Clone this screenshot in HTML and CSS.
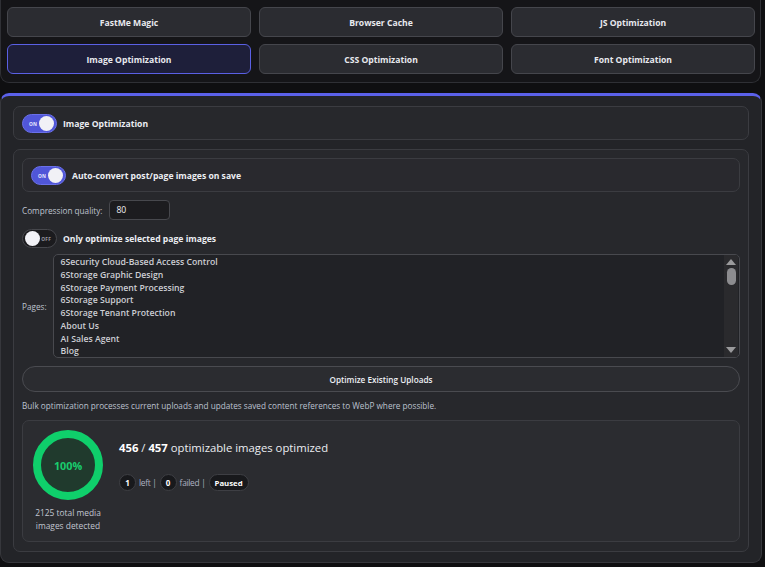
FILE: index.html
```html
<!DOCTYPE html>
<html>
<head>
<meta charset="utf-8">
<link rel="stylesheet" href="styles.css">
</head>
<body>
<nav class="tabs">
  <button class="tab">FastMe Magic</button>
  <button class="tab">Browser Cache</button>
  <button class="tab">JS Optimization</button>
  <button class="tab active">Image Optimization</button>
  <button class="tab">CSS Optimization</button>
  <button class="tab">Font Optimization</button>
</nav>

<main class="panel">
  <section class="card head-card">
    <span class="toggle on"><span class="tlabel">ON</span><span class="knob"></span></span>
    <span class="strong">Image Optimization</span>
  </section>

  <section class="card body-card">
    <div class="card sub-card">
      <span class="toggle on"><span class="tlabel">ON</span><span class="knob"></span></span>
      <span class="strong">Auto-convert post/page images on save</span>
    </div>

    <div class="row q-row">
      <label class="label">Compression quality:</label>
      <input class="num" type="text" value="80">
    </div>

    <div class="row sel-row">
      <span class="toggle off"><span class="knob"></span><span class="tlabel">OFF</span></span>
      <span class="strong">Only optimize selected page images</span>
    </div>

    <div class="row pages-row">
      <label class="label">Pages:</label>
      <div class="listbox">
        <ul class="options">
          <li>6Security Cloud-Based Access Control</li>
          <li>6Storage Graphic Design</li>
          <li>6Storage Payment Processing</li>
          <li>6Storage Support</li>
          <li>6Storage Tenant Protection</li>
          <li>About Us</li>
          <li>AI Sales Agent</li>
          <li>Blog</li>
        </ul>
        <div class="sb">
          <span class="arrow up"></span>
          <div class="track"><span class="thumb"></span></div>
          <span class="arrow down"></span>
        </div>
      </div>
    </div>

    <button class="bulk-btn">Optimize Existing Uploads</button>

    <p class="note">Bulk optimization processes current uploads and updates saved content references to WebP where possible.</p>

    <div class="card stats">
      <div class="ring-col">
        <div class="ring"><span>100%</span></div>
        <div class="total">2125 total media<br>images detected</div>
      </div>
      <div class="info">
        <div class="title"><b>456</b> / <b>457</b> optimizable images optimized</div>
        <div class="chips">
          <span class="dot">1</span><span class="muted">left |</span>
          <span class="dot">0</span><span class="muted">failed |</span>
          <span class="pill">Paused</span>
        </div>
      </div>
    </div>
  </section>
</main>
</body>
</html>
```

FILE: styles.css
```css
* { box-sizing: border-box; }
html, body { margin: 0; padding: 0; }
body {
  background: #0f0f11;
  font-family: "Open Sans", "Noto Sans", sans-serif;
  color: #e6e7ec;
  width: 765px;
  height: 567px;
  overflow: hidden;
}

.tabs {
  width: 761px;
  height: 83px;
  background: #151518;
  border: 1px solid #2f3035;
  border-top: none;
  border-radius: 0 0 9px 9px;
  padding: 7px 6px 7px 6px;
  display: grid;
  grid-template-columns: 244px 244px 244px;
  grid-template-rows: 30px 30px;
  column-gap: 8px;
  row-gap: 7px;
}
.tab {
  background: #2b2c31;
  border: 1px solid #45464c;
  border-radius: 6px;
  color: #e8e9ee;
  font-family: inherit;
  font-weight: 700;
  font-size: 8.6px;
  padding: 2px 0 0 0;
}
.tab.active {
  background: #1e1f3a;
  border-color: #5a60e4;
}

.panel {
  margin-top: 10px;
  width: 762px;
  height: 470px;
  background: #232428;
  border: 1px solid #36373c;
  border-top: 3px solid #5b61ea;
  border-radius: 9px;
  padding: 10px 12px 10px 12px;
  display: flex;
  flex-direction: column;
  gap: 9px;
}

.card {
  background: #27282c;
  border: 1px solid #3b3c41;
  border-radius: 7px;
}
.head-card {
  height: 34px;
  display: flex;
  align-items: center;
  gap: 6px;
  padding: 1px 8px 0 8px;
}
.strong {
  font-weight: 700;
  font-size: 8.6px;
  color: #eceef3;
}

.toggle {
  width: 35px;
  height: 19px;
  border-radius: 10px;
  display: flex;
  align-items: center;
  padding: 0 2px;
  flex: none;
}
.toggle.on {
  background: #5056d8;
  border: 1px solid #6a70ea;
  justify-content: space-between;
  padding-left: 6px;
}
.toggle.off {
  background: #1b1b1e;
  border: 1px solid #46474c;
  justify-content: space-between;
  padding-right: 5px;
}
.knob {
  width: 15px;
  height: 15px;
  border-radius: 50%;
  background: #f1f1f6;
}
.tlabel {
  font-size: 4.8px;
  font-weight: 700;
  color: #e8e9ff;
  letter-spacing: 0.2px;
}
.toggle.off .tlabel { color: #9a9ca4; }

.body-card {
  flex: 1;
  padding: 8px 8px 8px 8px;
  display: flex;
  flex-direction: column;
}
.sub-card {
  height: 34px;
  display: flex;
  align-items: center;
  gap: 6px;
  padding: 1px 8px 0 8px;
  background: #29292e;
}
.row {
  display: flex;
  align-items: center;
  gap: 6px;
}
.q-row { margin-top: 8px; }
.sel-row { margin-top: 9px; }
.pages-row { margin-top: 6px; gap: 6px; }

.label {
  font-size: 8.2px;
  color: #bfc3cf;
}
.num {
  width: 61px;
  height: 20px;
  background: #1c1c1f;
  border: 1px solid #47484d;
  border-radius: 4px;
  color: #f0f0f3;
  font-family: inherit;
  font-size: 8.6px;
  padding: 0 6px;
  outline: none;
  margin-left: 1px;
}

.listbox {
  flex: 1;
  height: 104px;
  background: #212226;
  border: 1px solid #48494e;
  border-radius: 5px;
  display: flex;
  overflow: hidden;
}
.options {
  flex: 1;
  list-style: none;
  margin: 0;
  padding: 1px 7px;
}
.options li {
  font-weight: 600;
  font-size: 8.7px;
  line-height: 12.75px;
  color: #cdced4;
  white-space: nowrap;
}
.sb {
  width: 14px;
  margin-right: 1px;
  background: #2a2a2d;
  display: flex;
  flex-direction: column;
  align-items: center;
  padding: 4px 0 4px 0;
}
.arrow {
  width: 0;
  height: 0;
  border-left: 5px solid transparent;
  border-right: 5px solid transparent;
}
.arrow.up { border-bottom: 6px solid #9a9a9c; }
.arrow.down { border-top: 6px solid #9a9a9c; }
.track {
  flex: 1;
  width: 100%;
  display: flex;
  justify-content: center;
  padding-top: 3px;
}
.thumb {
  width: 9px;
  height: 17px;
  border-radius: 5px;
  background: #8c8c8f;
}

.bulk-btn {
  margin-top: 8px;
  height: 26px;
  background: #2b2c30;
  border: 1px solid #4a4b50;
  border-radius: 13px;
  color: #eef0f5;
  font-family: inherit;
  font-weight: 600;
  font-size: 8.2px;
  padding: 0;
}
.note {
  margin: 8px 0 0 0;
  font-size: 8.2px;
  color: #bcc1cf;
  line-height: 12px;
}

.stats {
  margin-top: 8px;
  height: 122px;
  background: #2b2c30;
  display: flex;
  padding: 9px 10px;
  gap: 16px;
}
.ring-col {
  width: 70px;
  display: flex;
  flex-direction: column;
  align-items: center;
}
.ring {
  width: 70px;
  height: 70px;
  border-radius: 50%;
  border: 8px solid #0fcf6b;
  background: #203a2d;
  display: flex;
  align-items: center;
  justify-content: center;
}
.ring span {
  color: #19cd6e;
  font-weight: 700;
  font-size: 10.8px;
}
.total {
  margin-top: 6px;
  font-size: 8.4px;
  line-height: 13px;
  color: #c2c6d0;
  text-align: center;
  white-space: nowrap;
}
.info {
  padding-top: 10px;
  display: flex;
  flex-direction: column;
  gap: 19px;
}
.title {
  font-size: 11.3px;
  color: #eceef2;
}
.title b { font-weight: 700; color: #fff; }
.chips {
  display: flex;
  align-items: center;
  gap: 3px;
}
.dot {
  width: 17px;
  height: 17px;
  border-radius: 50%;
  background: #18191c;
  border: 1px solid #3e3f44;
  font-size: 8px;
  font-weight: 700;
  color: #fff;
  display: flex;
  align-items: center;
  justify-content: center;
  flex: none;
}
.muted {
  font-size: 8.4px;
  color: #aeb3c2;
  letter-spacing: -0.3px;
}
.pill {
  height: 17px;
  border-radius: 9px;
  background: #18191c;
  border: 1px solid #3e3f44;
  font-size: 7.8px;
  font-weight: 700;
  color: #fff;
  padding: 0 5px;
  display: flex;
  align-items: center;
}
```
